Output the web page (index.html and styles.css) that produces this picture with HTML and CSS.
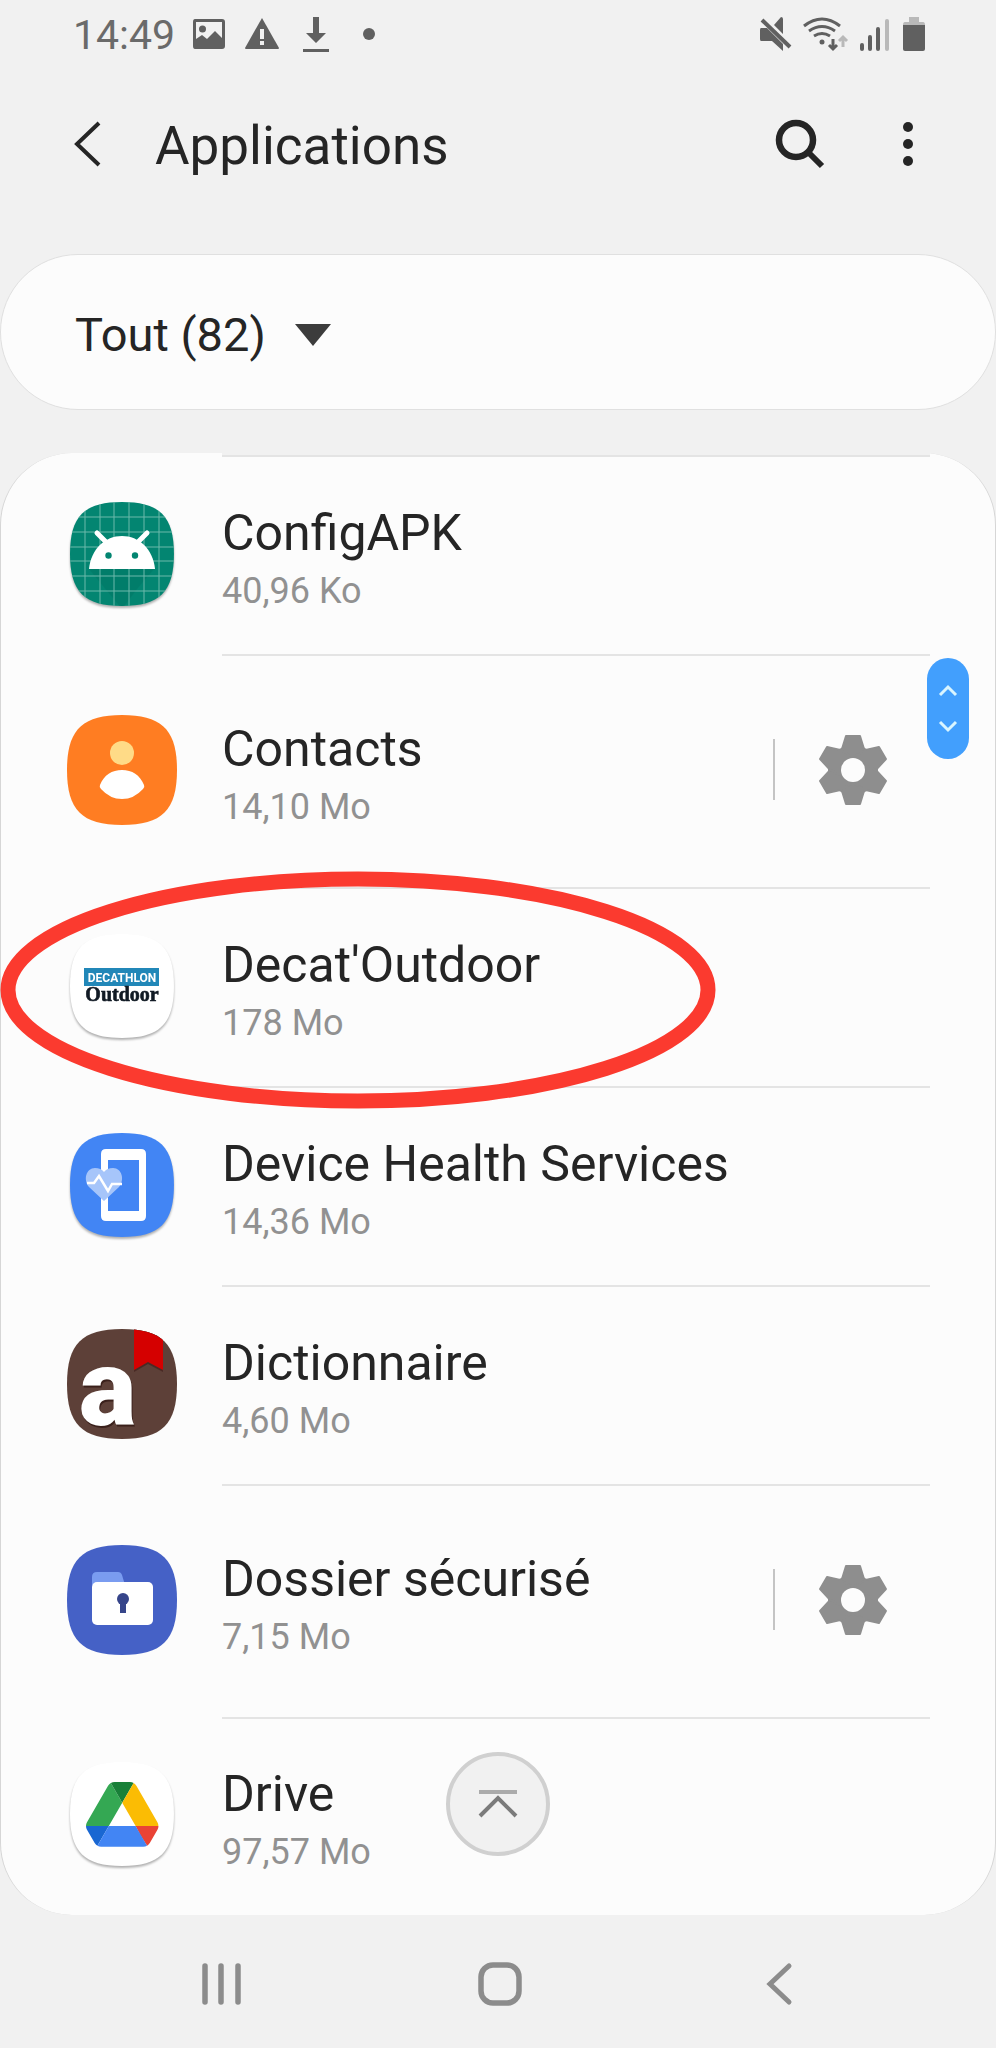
FILE: index.html
```html
<!DOCTYPE html>
<html lang="fr">
<head>
<meta charset="utf-8">
<meta name="viewport" content="width=device-width, initial-scale=1">
<title>Applications</title>
<link rel="stylesheet" href="styles.css">
</head>
<body>
<svg class="defs" aria-hidden="true">
  <defs>
    <path id="squircle" d="M55 0C95 0 110 15 110 55S95 110 55 110 0 95 0 55 15 0 55 0Z"/>
    <symbol id="gear" viewBox="-36 -36 72 72">
      <g fill="#8e8e8e" stroke="#8e8e8e" stroke-width="2" stroke-linejoin="round">
        <circle r="24"/>
        <path id="teeth" d="M-7-34H7L11-21V21L7 34H-7L-11 21V-21Z"/>
        <use href="#teeth" transform="rotate(60)"/>
        <use href="#teeth" transform="rotate(120)"/>
      </g>
      <circle r="12" fill="#fcfcfc"/>
    </symbol>
    <clipPath id="clip"><use href="#squircle"/></clipPath>
    <clipPath id="clip-small"><use href="#squircle" transform="translate(3 3) scale(.945)"/></clipPath>
  </defs>
</svg>

<div class="status">
  <span class="time">14:49</span>
  <svg width="36" height="34" viewBox="0 0 36 34" aria-hidden="true">
    <path fill="#606060" fill-rule="evenodd" d="M3 2H30Q33 2 33 5V29Q33 32 30 32H3Q1 32 1 29V5Q1 2 3 2ZM4 5V22L10 18L15 22L23 14L30 21V5Z"/>
    <circle cx="10.500" cy="12" r="3.500" fill="#606060"/>
  </svg>
  <svg width="36" height="34" viewBox="0 0 36 34" aria-hidden="true">
    <path fill="#606060" d="M17 1L34 31Q34 32 33 32H1Q0 32 0 31Z"/>
    <path fill="#f1f1f1" d="M15 12H19V22H15ZM15 24H19V28H15Z"/>
  </svg>
  <svg width="36" height="34" viewBox="0 0 36 34" aria-hidden="true">
    <path fill="#606060" d="M15 0H21V16H28L18 26L8 16H15ZM5 32H31V35H5Z"/>
  </svg>
  <svg width="36" height="34" viewBox="0 0 36 34" aria-hidden="true"><circle cx="18" cy="17" r="6" fill="#606060"/></svg>
  <div class="status-right">
    <svg width="32" height="34" viewBox="0 0 32 34" aria-hidden="true">
      <path fill="#606060" d="M3 11H9L25 27V34L14 24H3Q2 24 2 22V13Q2 11 3 11ZM16 8L23 0Q25 0 25 2V17Z"/>
      <path d="M4 3L32 30" stroke="#606060" stroke-width="4"/>
    </svg>
    <svg width="46" height="34" viewBox="0 0 46 34" aria-hidden="true">
      <g fill="none" stroke="#606060" stroke-width="3">
        <path d="M2 9Q20-5 38 9M7 14Q20 5 33 14M12 19Q20 14 28 19"/>
        <path d="M31 22V31M27 28L31 32L35 28"/>
        <path stroke="#b9b9b9" d="M41 30V21M37 24L41 20L45 24"/>
      </g>
      <circle cx="20" cy="25" r="2.500" fill="#606060"/>
    </svg>
    <svg width="31" height="34" viewBox="0 0 31 34" aria-hidden="true">
      <g stroke="#606060" stroke-width="4" stroke-linecap="round">
        <path d="M2 28V32M10 20V32M18 12V32"/><path stroke="#b9b9b9" d="M27 4V32"/>
      </g>
    </svg>
    <svg width="22" height="34" viewBox="0 0 22 34" aria-hidden="true">
      <path fill="#b9b9b9" d="M6 0H16V5H20Q22 5 22 8H0Q0 5 2 5H6Z"/>
      <path fill="#606060" d="M0 8H22V32Q22 34 20 34H2Q0 34 0 32Z"/>
    </svg>
  </div>
</div>

<header class="bar">
  <button class="plain" aria-label="Retour">
    <svg width="44" height="50" viewBox="0 0 44 50"><path d="M34 4L12 25L34 46" fill="none" stroke="#252525" stroke-width="4"/></svg>
  </button>
  <h1>Applications</h1>
  <button class="plain" aria-label="Rechercher">
    <svg width="50" height="50" viewBox="0 0 50 50"><g fill="none" stroke="#252525"><circle cx="21" cy="21" r="17" stroke-width="6.500"/><path d="M33 33L47 47" stroke-width="6"/></g></svg>
  </button>
  <button class="plain more" aria-label="Plus d'options">
    <svg width="30" height="50" viewBox="0 0 30 50"><g fill="#252525"><circle cx="15" cy="8" r="5"/><circle cx="15" cy="25" r="5"/><circle cx="15" cy="42" r="5"/></g></svg>
  </button>
</header>

<main>
  <div class="filter">
    <select aria-label="Filtre"><option>Tout (82)</option></select>
    <svg width="36" height="22" viewBox="0 0 36 22" aria-hidden="true"><path fill="#3c3c3c" d="M0 0H36L18 22Z"/></svg>
  </div>

  <section class="card">
    <div class="edge"></div>
    <ul>
      <li>
        <svg class="icon lifted" viewBox="0 0 110 110" aria-hidden="true">
          <g clip-path="url(#clip-small)">
            <path fill="#038571" d="M0 0H110V110H0Z"/>
            <path fill="#00705f" d="M22 70H87L70 90L55 110Z" opacity=".35"/>
            <path d="M18 0V110M33 0V110M47 0V110M62 0V110M77 0V110M92 0V110M0 18H110M0 33H110M0 48H110M0 62H110M0 77H110M0 92H110" stroke="#6cb9ab" stroke-width="1" fill="none"/>
          </g>
          <path d="M30 34L39 43M80 34L71 43" stroke="#fff" stroke-width="5" stroke-linecap="round"/>
          <path fill="#fff" d="M22 70C24 50 38 37 55 37S86 50 88 70Z"/>
          <circle cx="41.500" cy="56.500" r="3.200" fill="#038571"/><circle cx="68" cy="56.500" r="3.200" fill="#038571"/>
        </svg>
        <div class="body"><a href="#configapk"><span class="name">ConfigAPK</span><span class="size">40,96 Ko</span></a></div>
      </li>
      <li class="tall">
        <svg class="icon" viewBox="0 0 110 110" aria-hidden="true">
          <use href="#squircle" fill="#ff7d22"/>
          <circle cx="55" cy="38" r="12" fill="#ffdb87"/>
          <path fill="#fff" d="M33 70C37 60 45 55 55 55S73 60 77 70Q78 72 76 74Q67 84 55 84T34 74Q32 72 33 70Z"/>
        </svg>
        <div class="body"><a href="#contacts"><span class="name">Contacts</span><span class="size">14,10 Mo</span></a>
          <button class="plain settings" aria-label="Paramètres de Contacts"><svg width="72" height="72"><use href="#gear"/></svg></button></div>
      </li>
      <li class="marked">
        <svg class="icon lifted" viewBox="0 0 110 110" aria-hidden="true">
          <use href="#squircle" fill="#fff" transform="translate(3 3) scale(.945)"/>
          <path fill="#2187b8" d="M17 37H92V55H17Z"/>
          <text class="brand" x="55" y="51" text-anchor="middle">DECATHLON</text>
          <text class="brand-sub" x="55" y="70" text-anchor="middle">Outdoor</text>
        </svg>
        <div class="body"><a href="#decat"><span class="name">Decat'Outdoor</span><span class="size">178 Mo</span></a></div>
        <svg class="ring" viewBox="0 0 716 238" aria-hidden="true"><ellipse cx="358" cy="119" rx="350" ry="111" fill="none" stroke="#fb3a2f" stroke-width="15"/></svg>
      </li>
      <li>
        <svg class="icon lifted" viewBox="0 0 110 110" aria-hidden="true">
          <use href="#squircle" fill="#4285f4" transform="translate(3 3) scale(.945)"/>
          <path fill="#fff" fill-rule="evenodd" d="M39 19H74Q79 19 79 24V86Q79 91 74 91H39Q34 91 34 86V24Q34 19 39 19ZM41 30V81H72V30Z"/>
          <path fill="#a6c5fa" d="M37 71L22 57C16 50 19 38 28 38Q34 38 37 42Q40 38 46 38C55 38 58 50 52 57Z"/>
          <path d="M20 53H27L32 46L41 61L45 54H55" fill="none" stroke="#fff" stroke-width="2.500"/>
        </svg>
        <div class="body"><a href="#health"><span class="name">Device Health Services</span><span class="size">14,36 Mo</span></a></div>
      </li>
      <li>
        <svg class="icon" viewBox="0 0 110 110" aria-hidden="true">
          <g clip-path="url(#clip)">
            <path fill="#5d4038" d="M0 0H110V110H0Z"/>
            <path fill="#4a2a25" d="M67 0H96V43L81 35L67 43Z"/>
            <path fill="#d50000" d="M67 0H96V41L81 33L67 41Z"/>
          </g>
          <text class="letter shade" x="13" y="98">a</text>
          <text class="letter" x="12" y="96">a</text>
        </svg>
        <div class="body"><a href="#dictionnaire"><span class="name">Dictionnaire</span><span class="size">4,60 Mo</span></a></div>
      </li>
      <li class="tall">
        <svg class="icon" viewBox="0 0 110 110" aria-hidden="true">
          <use href="#squircle" fill="#4561c6"/>
          <path fill="#7a9cf0" d="M30 27H51Q54 27 55 30L58 40H25V32Q25 27 30 27Z"/>
          <rect x="25" y="37" width="61" height="43" rx="5" fill="#fff"/>
          <circle cx="56" cy="54" r="6" fill="#36458a"/><path fill="#36458a" d="M53 57H59V68H53Z"/>
        </svg>
        <div class="body"><a href="#dossier"><span class="name">Dossier sécurisé</span><span class="size">7,15 Mo</span></a>
          <button class="plain settings" aria-label="Paramètres de Dossier sécurisé"><svg width="72" height="72"><use href="#gear"/></svg></button></div>
      </li>
      <li>
        <svg class="icon lifted" viewBox="0 0 110 110" aria-hidden="true">
          <use href="#squircle" fill="#fff" transform="translate(3 3) scale(.945)"/>
          <g transform="translate(19 23) scale(.83)">
            <path d="m6.600 66.850 3.850 6.650c.8 1.400 1.950 2.500 3.300 3.300l13.750-23.800h-27.500c0 1.550.4 3.100 1.200 4.500z" fill="#1967d2"/>
            <path d="m43.650 25-13.750-23.800c-1.350.8-2.500 1.900-3.300 3.300l-25.400 44a9.060 9.060 0 0 0 -1.200 4.500h27.500z" fill="#34a853"/>
            <path d="m73.550 76.800c1.350-.8 2.500-1.900 3.300-3.300l1.600-2.750 7.650-13.250c.8-1.400 1.200-2.950 1.200-4.500h-27.500l5.850 11.500z" fill="#ea4335"/>
            <path d="m43.650 25 13.750-23.800c-1.350-.8-2.900-1.200-4.500-1.200h-18.500c-1.600 0-3.150.45-4.500 1.200z" fill="#188038"/>
            <path d="m59.800 53h-32.300l-13.750 23.800c1.350.8 2.900 1.200 4.500 1.200h50.800c1.600 0 3.150-.45 4.500-1.200z" fill="#4285f4"/>
            <path d="m73.400 26.500-12.700-22c-.8-1.400-1.950-2.500-3.300-3.300l-13.750 23.800 16.150 28h27.450c0-1.550-.4-3.100-1.200-4.500z" fill="#fbbc04"/>
          </g>
        </svg>
        <div class="body"><a href="#drive"><span class="name">Drive</span><span class="size">97,57 Mo</span></a></div>
      </li>
    </ul>
    <button class="plain thumb" aria-label="Défilement rapide">
      <svg width="42" height="101" viewBox="0 0 42 101"><path d="M13 37L21 29L29 37M13 64L21 72L29 64" fill="none" stroke="#d9f5ff" stroke-width="3"/></svg>
    </button>
    <button class="plain to-top" aria-label="Haut de la liste">
      <svg width="40" height="30" viewBox="0 0 40 30"><path d="M1 3H39" stroke="#ababab" stroke-width="4"/><path d="M2 27L20 9L38 27" fill="none" stroke="#7b7b7b" stroke-width="4"/></svg>
    </button>
  </section>
</main>

<nav class="system">
  <button class="plain" aria-label="Applications récentes"><svg width="44" height="46" viewBox="0 0 44 46"><path d="M6 5V41M22 5V41M39 5V41" stroke="#8c8c8c" stroke-width="5.500" stroke-linecap="round"/></svg></button>
  <button class="plain" aria-label="Accueil"><svg width="46" height="46" viewBox="0 0 46 46"><rect x="4" y="4" width="38" height="38" rx="12" fill="none" stroke="#8c8c8c" stroke-width="5.500"/></svg></button>
  <button class="plain" aria-label="Retour"><svg width="44" height="46" viewBox="0 0 44 46"><path d="M32 5L13 23L32 41" fill="none" stroke="#8c8c8c" stroke-width="5" stroke-linecap="round"/></svg></button>
</nav>
</body>
</html>
```

FILE: styles.css
```css
* { box-sizing: border-box; }

body {
  margin: 0;
  min-height: 100vh;
  display: flex;
  flex-direction: column;
  background: #f1f1f1;
  color: #252525;
  font-family: Roboto, "Liberation Sans", sans-serif;
}

svg { display: block; flex: none; overflow: visible; }
.defs { position: absolute; width: 0; height: 0; }

.plain {
  display: flex;
  align-items: center;
  justify-content: center;
  padding: 0;
  border: 0;
  background: none;
}

/* Status bar */
.status {
  display: flex;
  align-items: center;
  gap: 17px;
  height: 68px;
  padding: 0 71px 0 73px;
}
.time { padding-top: 2px; font-size: 41px; line-height: 48px; color: #6a6a6a; }
.status-right { display: flex; gap: 12px; margin-left: auto; }

/* Title bar */
.bar {
  display: flex;
  align-items: center;
  height: 152px;
  padding: 0 73px 0 65px;
}
h1 {
  flex: 1;
  margin: 0;
  padding: 4px 0 0 46px;
  font-size: 53px;
  font-weight: 400;
  line-height: 60px;
}
.more { margin-left: 68px; }

main { flex: 1; padding-top: 34px; }

.filter {
  display: flex;
  align-items: center;
  gap: 29px;
  height: 156px;
  padding: 5px 74px 0;
  border: 1px solid #e0e0e0;
  border-radius: 78px;
  background: #fcfcfc;
}
select {
  appearance: none;
  padding: 0;
  border: 0;
  background: none;
  color: inherit;
  font-family: inherit;
  font-size: 47px;
  line-height: 56px;
}

/* Application list */
.card {
  position: relative;
  margin-top: 43px;
  border: solid #d6d6d6;
  border-width: 0 1px;
  border-radius: 72px;
  background: #fcfcfc;
}
.edge {
  height: 4px;
  margin: 0 65px 0 221px;
  border-bottom: 2px solid #e4e4e4;
  background: #f1f1f1;
}
ul { margin: 0; padding: 0; list-style: none; }
li {
  position: relative;
  display: flex;
  align-items: center;
  gap: 45px;
  min-height: 199px;
  padding: 0 65px 0 66px;
}
li.tall { min-height: 233px; }
li:last-child { min-height: 196px; }

.icon { width: 110px; height: 110px; margin-bottom: 6px; }
.lifted { filter: drop-shadow(0 2px 1px rgba(0, 0, 0, .3)); }

.body {
  display: flex;
  flex: 1;
  align-items: center;
  align-self: stretch;
  padding-bottom: 4px;
  border-bottom: 2px solid #e4e4e4;
}
li:last-child .body { border-bottom: 0; }
.body a {
  display: flex;
  flex: 1;
  flex-direction: column;
  gap: 6px;
  padding-top: 8px;
  color: inherit;
  text-decoration: none;
}
.name { font-size: 50px; line-height: 60px; }
.size { font-size: 36px; line-height: 44px; color: #919191; }

.settings { width: 157px; height: 61px; border-left: 2px solid #c4c4c4; }

.brand { font: 700 12px Roboto, sans-serif; fill: #fff; }
.brand-sub {
  font: 700 20px "Liberation Serif", serif;
  fill: #111a24;
  stroke: #111a24;
  stroke-width: .6px;
}
.letter { font: 900 108px Roboto, sans-serif; fill: #fff; }
.shade { fill: #3a201b; }

/* Red highlight drawn over its row */
.ring {
  position: absolute;
  top: -18px;
  left: -1px;
  width: 716px;
  height: 238px;
  z-index: 1;
  pointer-events: none;
}

.thumb {
  position: absolute;
  top: 205px;
  right: 26px;
  border-radius: 21px;
  background: #429ffd;
}
.to-top {
  position: absolute;
  bottom: 59px;
  left: 50%;
  width: 104px;
  height: 104px;
  margin-left: -52px;
  border: 4px solid #d0d0d0;
  border-radius: 50%;
  background: #f1f1f1;
}

/* System navigation */
.system {
  display: grid;
  grid-template-columns: repeat(3, 1fr);
  height: 133px;
  padding: 4px 78px 0 82px;
}
```
